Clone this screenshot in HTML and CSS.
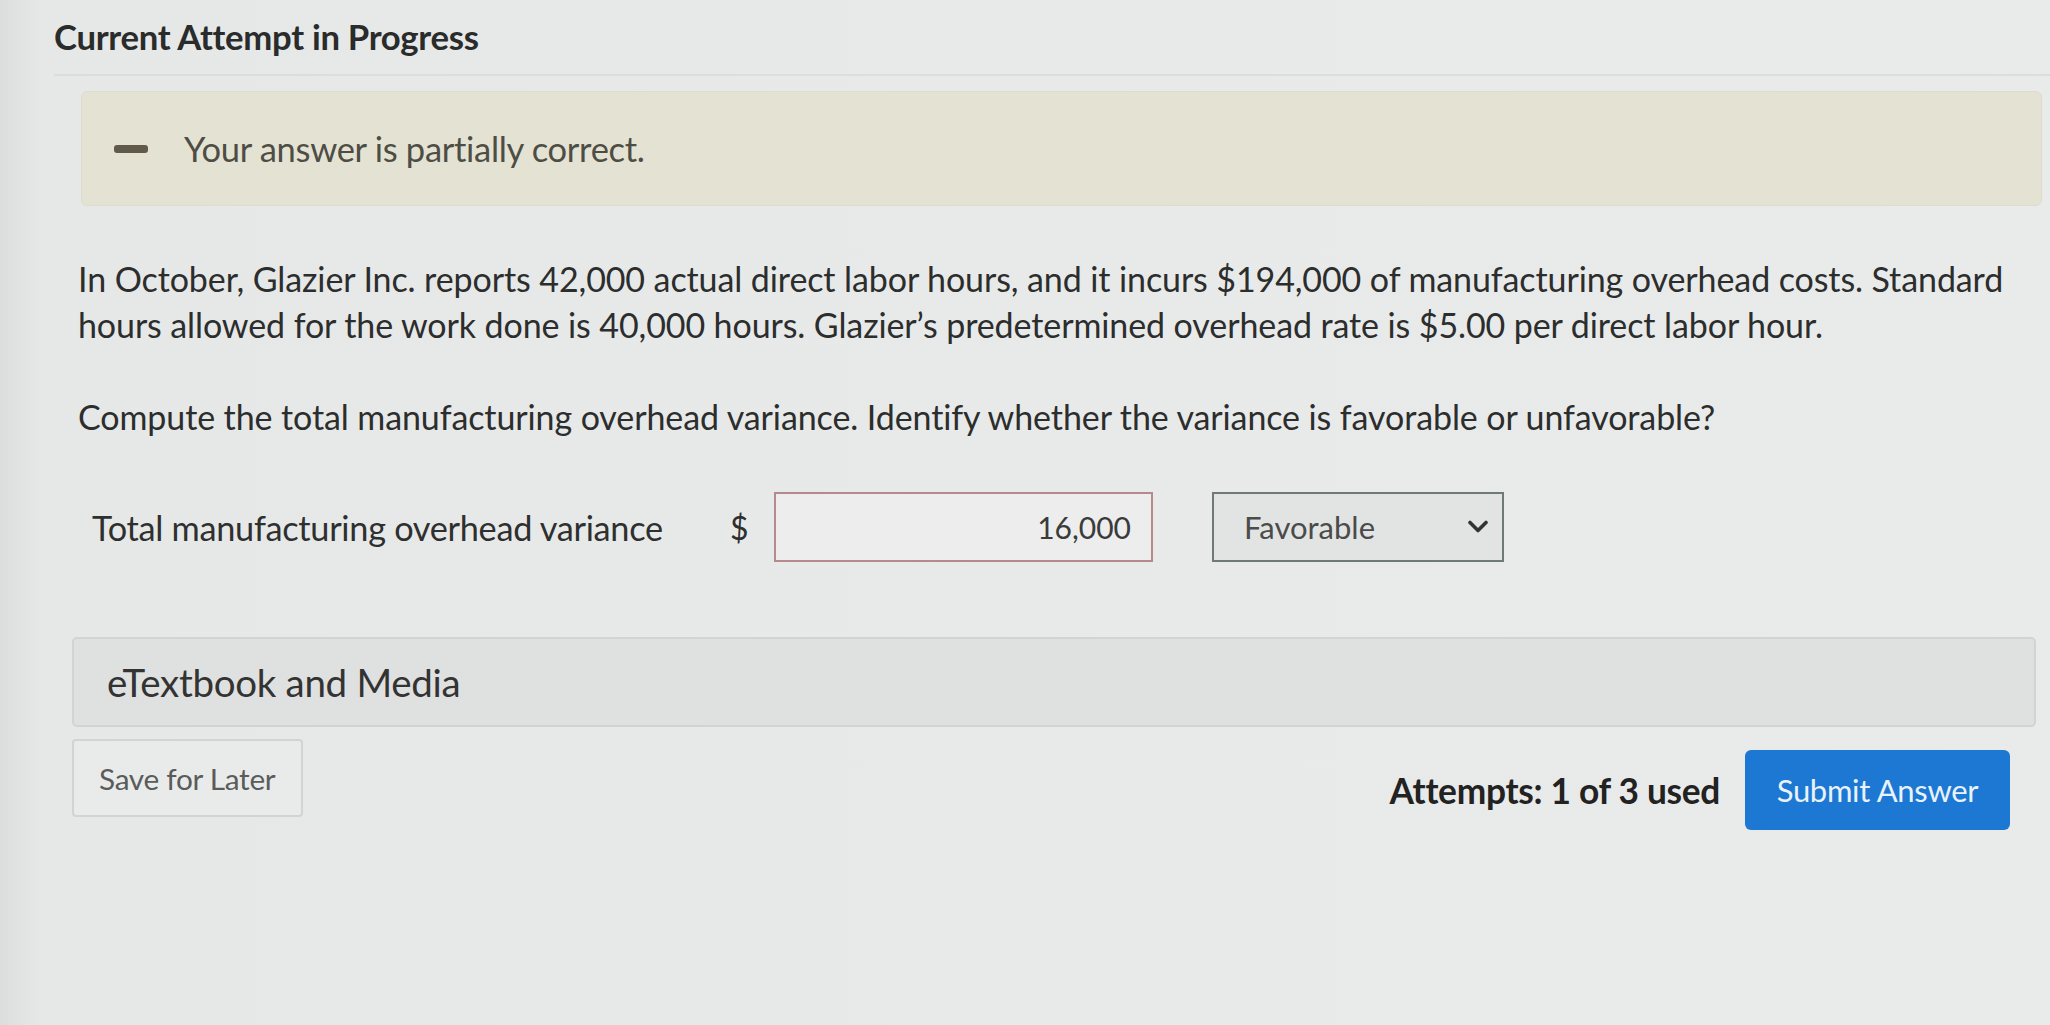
FILE: index.html
```html
<!DOCTYPE html>
<html lang="en">
<head>
<meta charset="utf-8">
<title>Current Attempt in Progress</title>
<link rel="stylesheet" href="styles.css">
</head>
<body>
<div class="page">
  <header class="header">
    <h1 class="title">Current Attempt in Progress</h1>
  </header>
  <main class="content">
    <div class="feedback">
      <span class="minus"></span>
      <span class="feedback-text">Your answer is partially correct.</span>
    </div>
    <p class="question">In October, Glazier Inc. reports 42,000 actual direct labor hours, and it incurs $194,000 of manufacturing overhead costs. Standard hours allowed for the work done is 40,000 hours. Glazier’s predetermined overhead rate is $5.00 per direct labor hour.</p>
    <p class="question prompt">Compute the total manufacturing overhead variance. Identify whether the variance is favorable or unfavorable?</p>
    <div class="answer-row">
      <span class="answer-label">Total manufacturing overhead variance</span>
      <span class="dollar">$</span>
      <div class="input">16,000</div>
      <div class="select">
        <span>Favorable</span>
        <svg class="chevron" width="20" height="14" viewBox="0 0 20 14"><path d="M2 2.5 L10 10.5 L18 2.5" fill="none" stroke="#333" stroke-width="3.6" stroke-linecap="round" stroke-linejoin="round"/></svg>
      </div>
    </div>
    <div class="media">eTextbook and Media</div>
    <div class="actions">
      <button class="btn-save">Save for Later</button>
      <div class="actions-right">
        <span class="attempts">Attempts: 1 of 3 used</span>
        <button class="btn-submit">Submit Answer</button>
      </div>
    </div>
  </main>
</div>
</body>
</html>
```
FILE: styles.css
```css
html, body {
  margin: 0;
  padding: 0;
}
body {
  background: #e6e8e7;
  font-family: Lato, "Noto Sans", sans-serif;
  color: #333;
  width: 2050px;
  height: 1025px;
  overflow: hidden;
}
.page {
  height: 1025px;
  background: linear-gradient(90deg, #dcdedd 0px, #e6e8e7 40px, #e8eae9 1000px, #e9ebea 2050px);
}
.header {
  padding: 16px 0 0 54px;
}
.title {
  margin: 0;
  font-size: 34.7px;
  font-weight: 700;
  line-height: 42px;
  color: #2a2b2b;
  letter-spacing: -0.3px;
  padding-bottom: 16px;
  border-bottom: 2px solid #dcdedd;
}
.content {
  padding: 15px 10px 0 76px;
}
.feedback {
  margin-left: 5px;
  margin-right: -2px;
  height: 115px;
  background: #e4e3d3;
  border: 1px solid #dedcca;
  border-radius: 6px;
  display: flex;
  align-items: center;
  padding-left: 32px;
  box-sizing: border-box;
}
.minus {
  width: 34px;
  height: 8px;
  border-radius: 3px;
  background: #615a4b;
  margin-right: 36px;
}
.feedback-text {
  font-size: 34.5px;
  letter-spacing: -0.3px;
  color: #4e4d45;
  line-height: 40px;
}
.question {
  margin: 0;
  font-size: 34px;
  letter-spacing: -0.1px;
  line-height: 46px;
  color: #2c2d2d;
  padding-left: 2px;
  max-width: 1960px;
}
.question:first-of-type {
  margin-top: 50px;
}
.prompt {
  margin-top: 46px;
}
.answer-row {
  display: flex;
  align-items: center;
  margin-top: 52px;
  padding-left: 16px;
}
.answer-label {
  font-size: 34.3px;
  letter-spacing: -0.3px;
  color: #2e2f2f;
  width: 638px;
}
.dollar {
  font-size: 32px;
  color: #2e2f2f;
  width: 44px;
}
.input {
  width: 379px;
  height: 70px;
  box-sizing: border-box;
  border: 2px solid #b58a8c;
  background: #ecedec;
  display: flex;
  align-items: center;
  justify-content: flex-end;
  padding-right: 20px;
  font-size: 30px;
  color: #3a3b3b;
}
.select {
  margin-left: 59px;
  width: 292px;
  height: 70px;
  box-sizing: border-box;
  border: 2px solid #6f7a72;
  background: #e2e4e3;
  display: flex;
  align-items: center;
  justify-content: space-between;
  padding: 0 14px 0 30px;
  font-size: 31px;
  color: #4a4b4b;
}
.chevron {
  display: block;
}
.media {
  margin-top: 75px;
  margin-left: -4px;
  margin-right: 4px;
  height: 90px;
  box-sizing: border-box;
  background: #dfe1e0;
  border: 2px solid #d2d4d3;
  border-radius: 5px;
  display: flex;
  align-items: center;
  padding-left: 33px;
  font-size: 38.5px;
  letter-spacing: -0.3px;
  color: #333;
}
.actions {
  margin-top: 12px;
  margin-left: -4px;
  display: flex;
  justify-content: space-between;
  align-items: flex-start;
  padding-right: 30px;
}
.btn-save {
  width: 231px;
  height: 78px;
  background: #e9ebea;
  border: 2px solid #d2d4d3;
  border-radius: 4px;
  font-family: Lato, "Noto Sans", sans-serif;
  font-size: 29.8px;
  letter-spacing: -0.3px;
  color: #5a5b5b;
  text-align: left;
  padding-left: 25px;
}
.actions-right {
  display: flex;
  align-items: center;
  margin-top: 11px;
}
.attempts {
  font-size: 35.3px;
  letter-spacing: -0.3px;
  font-weight: 700;
  color: #222;
  margin-right: 25px;
}
.btn-submit {
  width: 265px;
  height: 80px;
  background: #1c78d2;
  border: none;
  border-radius: 6px;
  color: #e8f2fb;
  font-family: Lato, "Noto Sans", sans-serif;
  font-size: 31px;
  letter-spacing: -0.3px;
}
```
